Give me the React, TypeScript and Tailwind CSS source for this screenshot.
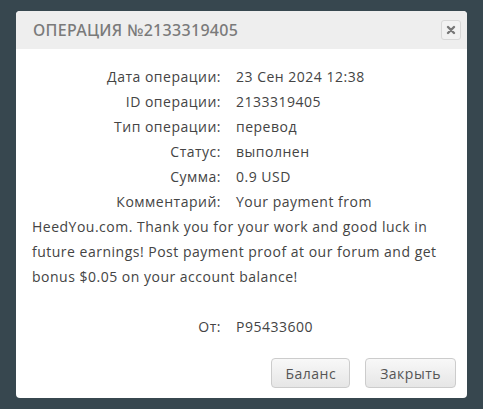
import React from "react";

const rows: [string, string][] = [
  ["Дата операции:", "23 Сен 2024 12:38"],
  ["ID операции:", "2133319405"],
  ["Тип операции:", "перевод"],
  ["Статус:", "выполнен"],
  ["Сумма:", "0.9 USD"],
];

export default function App() {
  return (
    <div className="w-[483px] h-[409px] bg-[#37474f] pt-[11px] pl-[16px] overflow-hidden" style={{ fontFamily: '"Open Sans", sans-serif' }}>
      <div className="w-[451px] h-[387px] bg-white rounded-[4px] overflow-hidden flex flex-col">
        <div className="h-[38px] bg-[#eeeeee] flex items-center justify-between pl-[17px] pr-[6px]">
          <span className="text-[16px] tracking-[0.3px] text-[#7a7a7a] font-medium" style={{ fontFamily: '"Noto Sans", sans-serif' }}>ОПЕРАЦИЯ №2133319405</span>
          <button className="w-[20px] h-[20px] rounded-[3px] border border-[#d8d8d8] bg-[#f2f2f2] flex items-center justify-center">
            <svg width="10" height="10" viewBox="0 0 10 10">
              <path d="M2 2 L8 8 M8 2 L2 8" stroke="#777" strokeWidth="2.4" strokeLinecap="round" />
            </svg>
          </button>
        </div>
        <div className="pt-[15px] pl-[16px] pr-[16px] text-[14px] leading-[25px] tracking-[0.5px] text-[#444]">
          {rows.map(([l, v]) => (
            <div key={l}>
              <span className="inline-block w-[189px] text-right mr-[15px]">{l}</span>
              <span>{v}</span>
            </div>
          ))}
          <p>
            <span className="inline-block w-[189px] text-right mr-[15px]">Комментарий:</span>
            <span>Your payment from HeedYou.com. Thank you for your work and good luck in future earnings! Post payment proof at our forum and get bonus $0.05 on your account balance!</span>
          </p>
          <div className="mt-[25px]">
            <span className="inline-block w-[189px] text-right mr-[15px]">От:</span>
            <span>P95433600</span>
          </div>
        </div>
        <div className="mt-auto flex justify-end gap-[15px] pr-[11px] pb-[10px]">
          <button className="h-[30px] px-[13px] rounded-[4px] border border-[#cccccc] bg-gradient-to-b from-[#f8f8f8] to-[#e6e6e6] text-[14px] tracking-[0.5px] text-[#555]">Баланс</button>
          <button className="h-[30px] px-[14px] rounded-[4px] border border-[#cccccc] bg-gradient-to-b from-[#f8f8f8] to-[#e6e6e6] text-[14px] tracking-[0.5px] text-[#555]">Закрыть</button>
        </div>
      </div>
    </div>
  );
}
